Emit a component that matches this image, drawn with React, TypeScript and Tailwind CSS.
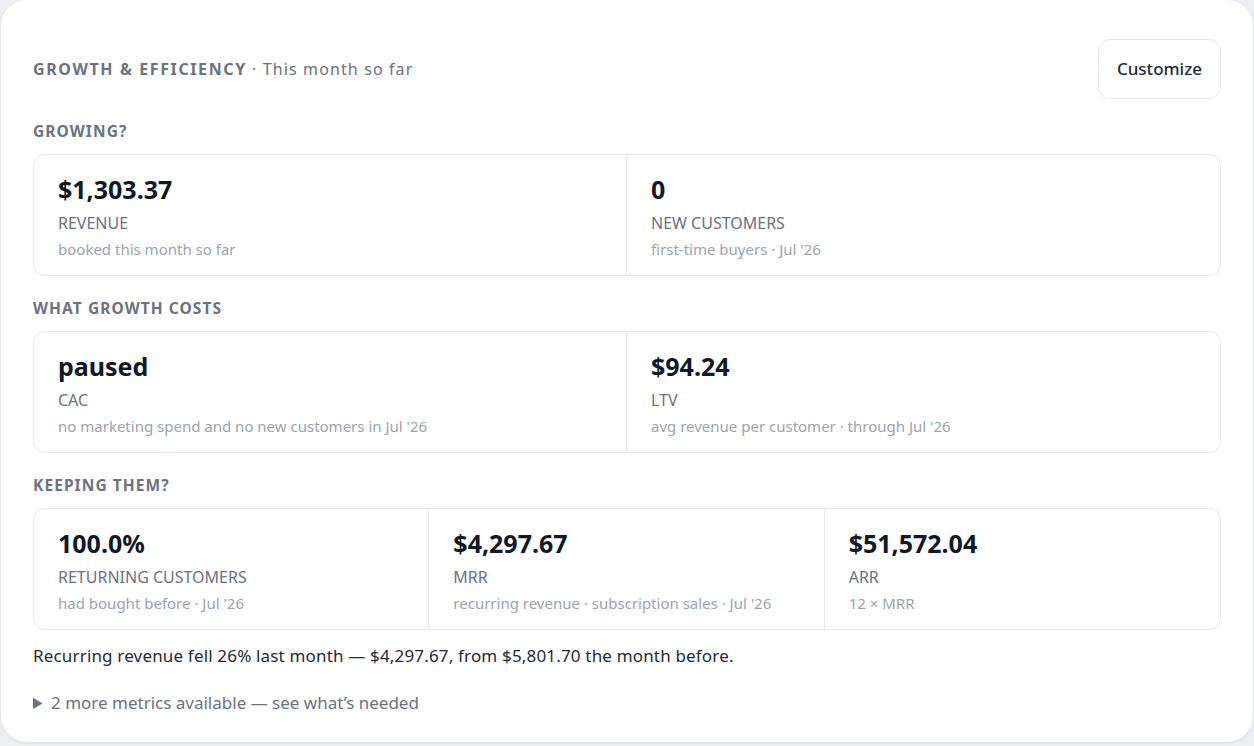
import React from "react";

type Metric = { value: string; label: string; note: string };

const growing: Metric[] = [
  { value: "$1,303.37", label: "REVENUE", note: "booked this month so far" },
  { value: "0", label: "NEW CUSTOMERS", note: "first-time buyers · Jul '26" },
];

const costs: Metric[] = [
  { value: "paused", label: "CAC", note: "no marketing spend and no new customers in Jul '26" },
  { value: "$94.24", label: "LTV", note: "avg revenue per customer · through Jul '26" },
];

const keeping: Metric[] = [
  { value: "100.0%", label: "RETURNING CUSTOMERS", note: "had bought before · Jul '26" },
  { value: "$4,297.67", label: "MRR", note: "recurring revenue · subscription sales · Jul '26" },
  { value: "$51,572.04", label: "ARR", note: "12 × MRR" },
];

function SectionTitle({ children }: { children: React.ReactNode }) {
  return (
    <h3 className="text-[15.5px] font-bold uppercase leading-5 tracking-[0.07em] text-[#6b7280]">
      {children}
    </h3>
  );
}

function MetricRow({ items }: { items: Metric[] }) {
  const cols = items.length === 3 ? "grid-cols-3" : "grid-cols-2";
  return (
    <div
      className={`grid ${cols} divide-x divide-[#e5e7eb] rounded-[12px] border border-[#e5e7eb] bg-white`}
    >
      {items.map((m) => (
        <div key={m.label} className="px-6 pt-[18px] pb-[15px]">
          <div className="text-[25px] font-bold leading-8 text-[#111827]">{m.value}</div>
          <div className="mt-[6px] text-[16px] leading-6 text-[#6b7280]">{m.label}</div>
          <div className="mt-[3px] text-[15px] leading-[22px] text-[#9ca3af]">{m.note}</div>
        </div>
      ))}
    </div>
  );
}

export default function App() {
  return (
    <div
      className="h-[746px] bg-[#eceef1] pb-[4px] pl-[1px] pr-[1px]"
      style={{ fontFamily: '"Noto Sans", "Open Sans", Arial, sans-serif' }}
    >
      <div className="h-full rounded-[26px] bg-white px-8 pt-[39px] shadow-[0_1px_3px_rgba(0,0,0,0.08)]">
        <div className="flex items-center justify-between">
          <div className="text-[16px] leading-6">
            <span className="font-bold uppercase tracking-[0.1em] text-[#6b7280]">
              Growth &amp; Efficiency
            </span>
            <span className="tracking-[0.07em] text-[#6b7280]"> · This month so far</span>
          </div>
          <button className="h-[60px] w-[123px] rounded-[12px] border border-[#e5e7eb] bg-white text-[17px] font-medium text-[#1f2937]">
            Customize
          </button>
        </div>

        <div className="mt-[22px]">
          <SectionTitle>Growing?</SectionTitle>
          <div className="mt-[13px]">
            <MetricRow items={growing} />
          </div>
        </div>

        <div className="mt-[22px]">
          <SectionTitle>What growth costs</SectionTitle>
          <div className="mt-[13px]">
            <MetricRow items={costs} />
          </div>
        </div>

        <div className="mt-[22px]">
          <SectionTitle>Keeping them?</SectionTitle>
          <div className="mt-[13px]">
            <MetricRow items={keeping} />
          </div>
        </div>

        <p className="mt-[14px] text-[17px] leading-6 tracking-[0.01em] text-[#1f2937]">
          Recurring revenue fell 26% last month — $4,297.67, from $5,801.70 the month before.
        </p>

        <details className="mt-[23px] text-[17px] leading-6 text-[#6b7280]">
          <summary className="cursor-pointer">2 more metrics available — see what’s needed</summary>
        </details>
      </div>
    </div>
  );
}
